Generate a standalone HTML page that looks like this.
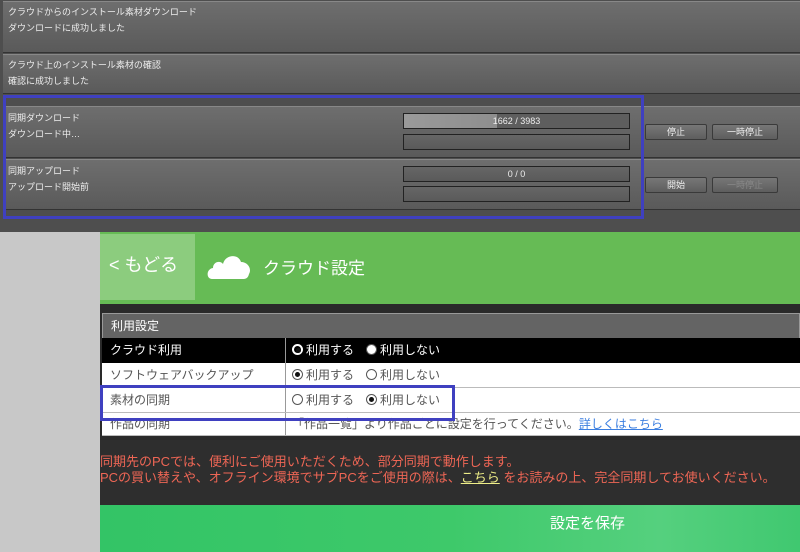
<!DOCTYPE html>
<html><head><meta charset="utf-8"><style>
*{margin:0;padding:0;box-sizing:border-box}
body{width:800px;height:552px;overflow:hidden;background:#c8c8c8;font-family:"Liberation Sans","Noto Sans CJK JP",sans-serif;position:relative}
.top{position:absolute;left:0;top:0;width:800px;height:232px;background:#4e4e4e}
.row{position:absolute;left:3px;right:0;background:linear-gradient(#6e6e6e,#5a5a5a);border-top:1px solid #888;border-bottom:1px solid #333;color:#eee;font-size:9px;padding:2px 5px;line-height:16px}
.bar{position:absolute;left:403px;width:227px;height:16px;border:1px solid #222;background:linear-gradient(#666,#5a5a5a);color:#eee;font-size:9px;text-align:center;line-height:14px}
.btn{position:absolute;height:16px;border:1px solid #3a3a3a;background:linear-gradient(#777,#5e5e5e);color:#eee;font-size:9px;text-align:center;line-height:14px;border-radius:2px}
.box{position:absolute;border:3px solid #3f40c0}
.green{position:absolute;left:100px;top:232px;width:700px;height:72px;background:#66bb55}
.back{position:absolute;left:100px;top:234px;width:95px;height:66px;background:#8ccc7e;color:#fff;font-size:18px;line-height:62px;padding-left:9px}
.title{position:absolute;left:263px;top:254px;color:#fff;font-size:17px}
.tbl{position:absolute;left:100px;top:304px;width:700px;height:136px;background:#2a2a2a;padding:9px 0 0 2px}
.tr{height:25px;display:flex;font-size:12px;line-height:24px;border-bottom:1px solid #bbb}
.tr .a{width:184px;padding-left:8px;border-right:1px solid #999}
.tr .b{flex:1;padding-left:6px}
.rd{display:inline-block;width:11px;height:11px;border-radius:50%;border:1px solid #555;vertical-align:-1px;margin-right:3px;background:#fff;position:relative}
.rd.on::after{content:"";position:absolute;left:2px;top:2px;width:5px;height:5px;border-radius:50%;background:#111}
.note{position:absolute;left:100px;top:440px;width:700px;height:65px;background:#2e2e2e;color:#ee6655;font-size:13px;line-height:16px;padding-top:14px;white-space:nowrap}
.save{position:absolute;left:100px;top:505px;width:700px;height:47px;background:linear-gradient(90deg,#33c466,#3ec96a 50%,#55d07e 80%,#40c870);color:#fff;font-size:15px;line-height:38px;padding-left:450px}
</style></head><body>
<div class="top">
<div class="row" style="top:1px;height:52px">クラウドからのインストール素材ダウンロード<br>ダウンロードに成功しました</div>
<div class="row" style="top:54px;height:40px">クラウド上のインストール素材の確認<br>確認に成功しました</div>
<div class="row" style="top:106px;height:52px;padding-top:3px">同期ダウンロード<br>ダウンロード中…</div>
<div class="row" style="top:159px;height:51px;padding-top:3px">同期アップロード<br>アップロード開始前</div>
<div class="bar" style="top:113px;background:linear-gradient(90deg,#9a9a9a 0,#8e8e8e 93px,#5e5e5e 93px)">1662 / 3983</div>
<div class="bar" style="top:134px"></div>
<div class="bar" style="top:166px">0 / 0</div>
<div class="bar" style="top:186px"></div>
<div class="btn" style="left:645px;width:62px;top:124px">停止</div>
<div class="btn" style="left:712px;width:66px;top:124px">一時停止</div>
<div class="btn" style="left:645px;width:62px;top:177px">開始</div>
<div class="btn" style="left:712px;width:66px;top:177px;color:#888">一時停止</div>
<div class="box" style="left:3px;top:95px;width:641px;height:124px"></div>
</div>
<div class="green"></div>
<div class="back">&lt; もどる</div>
<svg style="position:absolute;left:206px;top:252px" width="46" height="28" viewBox="0 0 46 28"><path d="M6 27 C0 27 0 17 7 16 C7 10 14 8 17 12 C19 3 32 1 35 10 C42 10 46 17 43 22 C42 26 40 27 37 27 Z" fill="#fff"/></svg>
<div class="title">クラウド設定</div>
<div class="tbl">
<div style="background:#646464;color:#fff;font-size:12px;height:25px;line-height:24px;padding-left:8px;border:1px solid #999;border-bottom:none;width:698px">利用設定</div>
<div class="tr" style="background:#000;color:#fff;border-bottom:none"><div class="a">クラウド利用</div><div class="b"><span class="rd on" style="border:2px solid #fff;background:#000"></span>利用する　<span class="rd" style="background:#fff"></span>利用しない</div></div>
<div class="tr" style="background:#fff;color:#555"><div class="a">ソフトウェアバックアップ</div><div class="b"><span class="rd on"></span>利用する　<span class="rd"></span>利用しない</div></div>
<div class="tr" style="background:#fff;color:#555"><div class="a">素材の同期</div><div class="b"><span class="rd"></span>利用する　<span class="rd on"></span>利用しない</div></div>
<div class="tr" style="background:#fff;color:#555;height:23px;line-height:22px"><div class="a">作品の同期</div><div class="b">「作品一覧」より作品ごとに設定を行ってください。<span style="color:#3a7ee0;text-decoration:underline">詳しくはこちら</span></div></div>
</div>
<div class="box" style="left:100px;top:385px;width:355px;height:36px"></div>
<div class="note">同期先のPCでは、便利にご使用いただくため、部分同期で動作します。<br>PCの買い替えや、オフライン環境でサブPCをご使用の際は、<span style="color:#eeee88;text-decoration:underline">こちら</span> をお読みの上、完全同期してお使いください。</div>
<div class="save">設定を保存</div>
</body></html>
